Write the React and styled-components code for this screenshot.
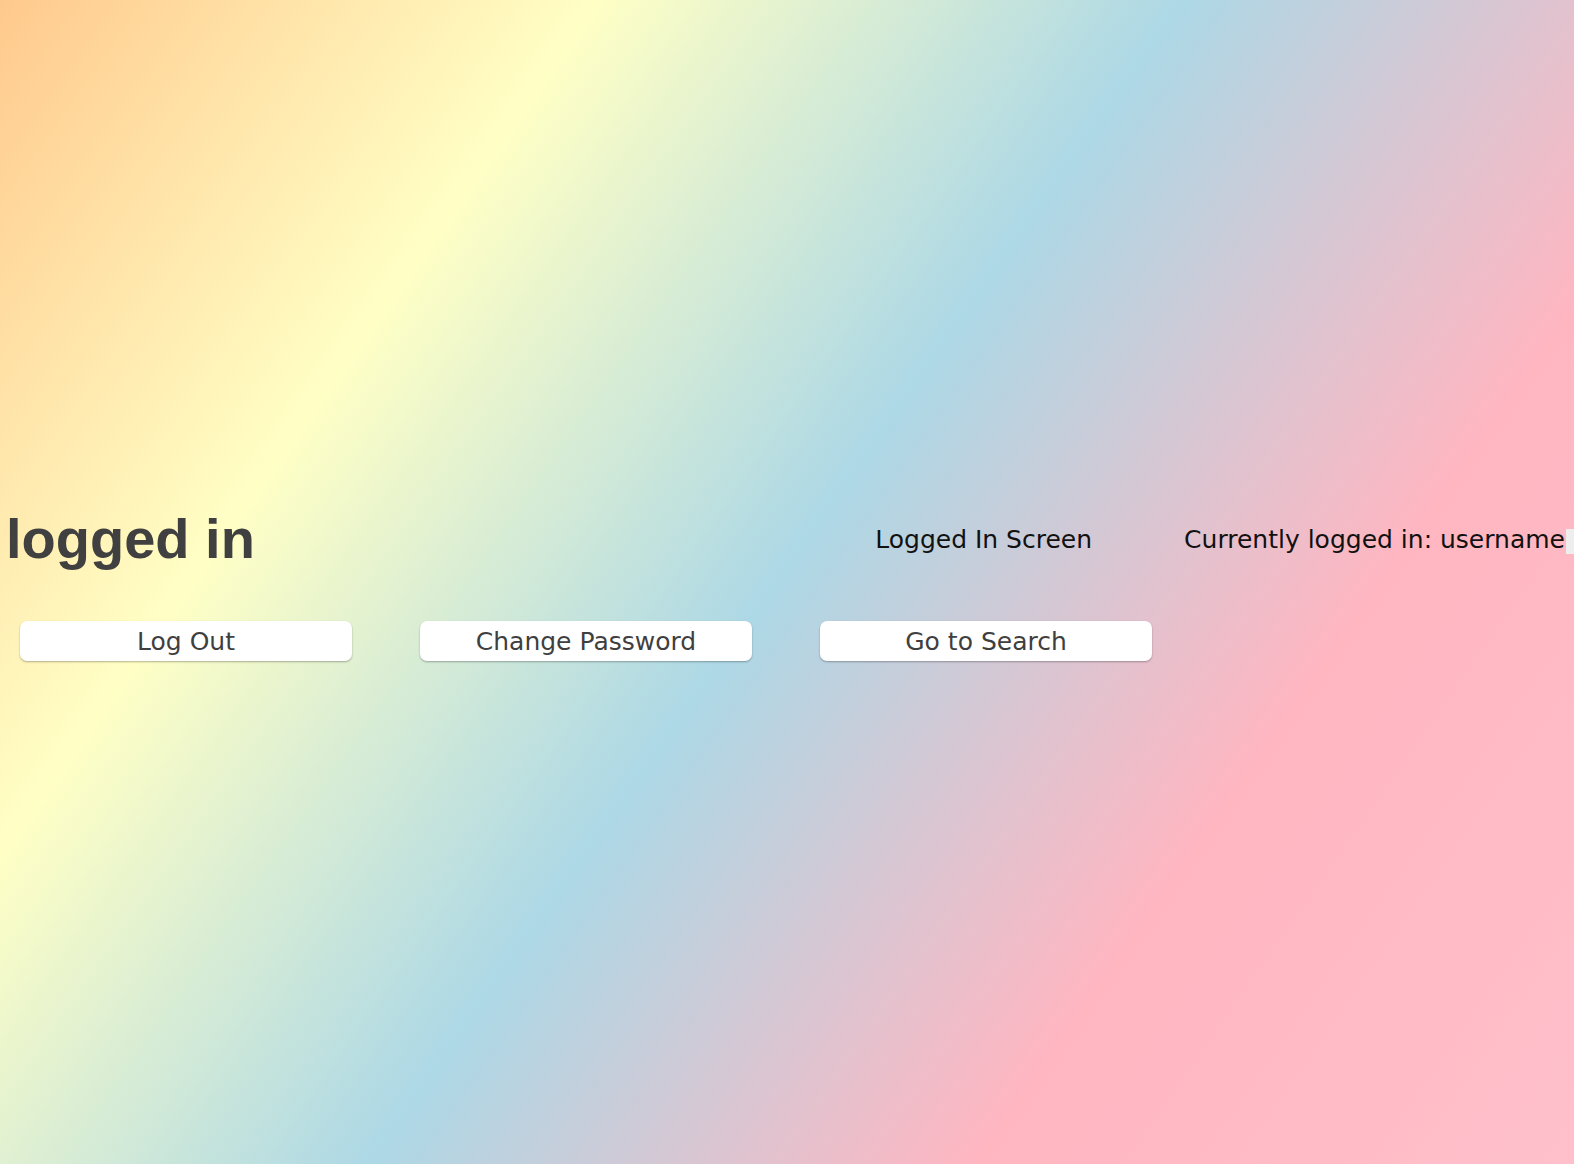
import React from "react";
import styled, { createGlobalStyle } from "styled-components";

const GlobalStyle = createGlobalStyle`
  html, body {
    margin: 0;
    padding: 0;
    overflow: hidden;
  }
  body {
    font-family: "DejaVu Sans", "Open Sans", sans-serif;
  }
`;

const Page = styled.div`
  width: 100vw;
  height: 100vh;
  box-sizing: border-box;
  padding-top: 4px;
  background: linear-gradient(
    125deg,
    #ffc98d 0%,
    #ffffc5 25%,
    #add8e6 49.5%,
    #ffb6c1 75%,
    #ffc0cb 100%
  );
  display: flex;
  flex-direction: column;
  justify-content: center;
  gap: 50px;
  overflow: hidden;
`;

const Header = styled.header`
  display: flex;
  align-items: center;
  height: 64px;
  padding-left: 6px;
`;

const Title = styled.h1`
  flex: 1;
  margin: 0;
  font-family: "Liberation Sans", Arial, sans-serif;
  font-weight: 700;
  font-size: 56px;
  line-height: 64px;
  color: #404040;
`;

const Info = styled.span`
  font-size: 25px;
  color: #111;
  white-space: nowrap;
  margin-right: ${(p) => p.$gap || 0}px;
`;

const Stub = styled.span`
  flex-shrink: 0;
  width: 8px;
  height: 25px;
  margin-left: 1px;
  margin-top: 4px;
  background: #eeeeee;
`;

const Actions = styled.nav`
  display: flex;
  gap: 68px;
  padding-left: 20px;
`;

const Button = styled.button`
  width: 332px;
  height: 40px;
  border: none;
  border-radius: 7px;
  background: #ffffff;
  box-shadow: 0 1px 2px rgba(0, 0, 0, 0.3);
  font-family: "DejaVu Sans", "Open Sans", sans-serif;
  font-size: 25px;
  color: #3f3f3f;
  cursor: pointer;
  padding: 0;
`;

export default function App() {
  return (
    <>
      <GlobalStyle />
      <Page>
        <Header>
          <Title>logged in</Title>
          <Info $gap={92}>Logged In Screen</Info>
          <Info>Currently logged in: username</Info>
          <Stub />
        </Header>
        <Actions>
          <Button>Log Out</Button>
          <Button>Change Password</Button>
          <Button>Go to Search</Button>
        </Actions>
      </Page>
    </>
  );
}
